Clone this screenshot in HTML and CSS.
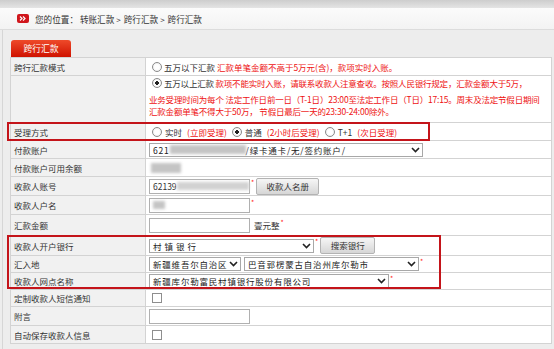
FILE: index.html
```html
<!DOCTYPE html>
<html lang="zh-CN">
  <head>
    <meta charset="UTF-8" />
    <title>跨行汇款</title>
    <link rel="stylesheet" href="styles.css">
  </head>
  <body>
    <div class="topbar"></div>
    <div class="crumb">
      <svg class="crumb-icon" width="12" height="9" viewBox="0 0 12 9">
        <rect x="0" y="0" width="12" height="9" rx="2" fill="#d0161c" />
        <path d="M3 2.5 L5 4.5 L3 6.5 M6 2.5 L8 4.5 L6 6.5" stroke="#fff" stroke-width="1.2" fill="none" />
      </svg>
      <span>您的位置： 转账汇款<span class="gt">&gt;</span>跨行汇款<span class="gt">&gt;</span>跨行汇款</span>
    </div>

    <div class="panel">
      <div class="tab">跨行汇款</div>

      <table class="form">
        <tr class="r18">
          <td class="label">跨行汇款模式</td>
          <td class="value">
            <div class="field"><span class="radio"></span>五万以下汇款&nbsp;<span class="warn">汇款单笔金额不高于5万元(含)，款项实时入账。</span></div>
          </td>
        </tr>
        <tr class="r47">
          <td class="label"></td>
          <td class="value notice">
            <div class="l1"><span class="radio on"></span>五万以上汇款&nbsp;<span class="warn">款项不能实时入账，请联系收款人注意查收。按照人民银行规定，汇款金额大于5万，</span></div>
            <div class="ln warn">业务受理时间为每个 法定工作日前一日（T-1日）23:00至法定工作日（T日）17:15。周末及法定节假日期间</div>
            <div class="ln warn">汇款金额单笔不得大于50万， 节假日最后一天的23:30-24:00除外。</div>
          </td>
        </tr>
        <tr class="r18">
          <td class="label">受理方式</td>
          <td class="value">
            <div class="field mode">
              <span class="radio"></span>实时<span class="warn">(立即受理)</span>
              <span class="radio on"></span>普通<span class="warn">(2小时后受理)</span>
              <span class="radio"></span>T+1<span class="warn">(次日受理)</span>
            </div>
          </td>
        </tr>
        <tr class="r18">
          <td class="label">付款账户</td>
          <td class="value">
            <div class="field">
              <span class="sel w-acct"><span class="opt">621<span class="blur b-acct"></span>/绿卡通卡/无/签约账户/</span><svg class="chev" width="9" height="6" viewBox="0 0 9 6"><path d="M1 1 L4.5 4.5 L8 1" stroke="#222" stroke-width="1.6" fill="none" /></svg></span>
            </div>
          </td>
        </tr>
        <tr class="r18">
          <td class="label">付款账户可用余额</td>
          <td class="value"><div class="field"><span class="blur b-bal"></span></div></td>
        </tr>
        <tr class="r19">
          <td class="label">收款人账号</td>
          <td class="value">
            <div class="field">
              <span class="inp">62139<span class="blur b-no"></span></span><span class="req">*</span><span class="btn btn-book">收款人名册</span>
            </div>
          </td>
        </tr>
        <tr class="r19">
          <td class="label">收款人户名</td>
          <td class="value"><div class="field"><span class="inp"><span class="blur b-name"></span></span><span class="req">*</span></div></td>
        </tr>
        <tr class="r21">
          <td class="label">汇款金额</td>
          <td class="value"><div class="field"><span class="inp"></span><span class="unit">壹元整</span><span class="req">*</span></div></td>
        </tr>
        <tr class="r20">
          <td class="label">收款人开户银行</td>
          <td class="value">
            <div class="field">
              <span class="sel w-bank"><span class="opt wide">村镇银行</span><svg class="chev" width="9" height="6" viewBox="0 0 9 6"><path d="M1 1 L4.5 4.5 L8 1" stroke="#222" stroke-width="1.6" fill="none" /></svg></span><span class="req">*</span><span class="btn btn-search">搜索银行</span>
            </div>
          </td>
        </tr>
        <tr class="r17">
          <td class="label">汇入地</td>
          <td class="value">
            <div class="field">
              <span class="sel w-prov"><span class="opt">新疆维吾尔自治区</span><svg class="chev" width="9" height="6" viewBox="0 0 9 6"><path d="M1 1 L4.5 4.5 L8 1" stroke="#222" stroke-width="1.6" fill="none" /></svg></span><span class="sel w-city"><span class="opt">巴音郭楞蒙古自治州库尔勒市</span><svg class="chev" width="9" height="6" viewBox="0 0 9 6"><path d="M1 1 L4.5 4.5 L8 1" stroke="#222" stroke-width="1.6" fill="none" /></svg></span><span class="req">*</span>
            </div>
          </td>
        </tr>
        <tr class="r17">
          <td class="label">收款人网点名称</td>
          <td class="value">
            <div class="field">
              <span class="sel w-branch"><span class="opt">新疆库尔勒富民村镇银行股份有限公司</span><svg class="chev" width="9" height="6" viewBox="0 0 9 6"><path d="M1 1 L4.5 4.5 L8 1" stroke="#222" stroke-width="1.6" fill="none" /></svg></span><span class="req">*</span>
            </div>
          </td>
        </tr>
        <tr class="r17">
          <td class="label">定制收款人短信通知</td>
          <td class="value"><div class="field"><span class="check"></span></div></td>
        </tr>
        <tr class="r19">
          <td class="label">附言</td>
          <td class="value"><div class="field"><span class="inp"></span></div></td>
        </tr>
        <tr class="r18">
          <td class="label">自动保存收款人信息</td>
          <td class="value"><div class="field"><span class="check"></span></div></td>
        </tr>
      </table>

      <!-- red annotation frames drawn over the form -->
      <div class="mark mark-mode"></div>
      <div class="mark mark-bank"></div>
    </div>
  </body>
</html>
```

FILE: styles.css
```css
body {
  margin: 0;
  background-color: #ededed;
  font-family: "Noto Sans CJK SC", "Noto Sans", sans-serif;
  font-size: 8.5px;
  color: #333;
}
.topbar {
  height: 8px;
  background: linear-gradient(#cdcdcd, #e4e4e4);
}
.crumb {
  display: flex;
  align-items: center;
  gap: 6px;
  height: 21px;
  padding-left: 17px;
  background: linear-gradient(#fbfbfb, #f3f3f3);
  border-bottom: 1px solid #dcdcdc;
  font-size: 8.6px;
}
.crumb-icon {
  display: block;
}
.gt {
  margin: 0 3px 0 2px;
  font-size: 8px;
}
.panel {
  position: relative;
  margin-left: 2px;
  padding: 10px 2px 6px 8px;
  border-left: 1px solid #d6d6d6;
}
.tab {
  display: inline-block;
  width: 60px;
  height: 17px;
  line-height: 17px;
  text-align: center;
  color: #fff;
  font-size: 8.8px;
  border-radius: 3px 3px 0 0;
  background: linear-gradient(#ee4a2a, #cf1300);
  vertical-align: bottom;
}
.form {
  width: 542px;
  margin-left: -1px;
  border-collapse: collapse;
  table-layout: fixed;
}
.form td {
  border: 1px solid #d3d3d3;
  padding: 0;
  line-height: 12px;
  white-space: nowrap;
}
.label {
  width: 131px;
  padding-left: 3px !important;
  background-color: #f1f1f1;
}
.value {
  padding-left: 3px !important;
  background-color: #fff;
}
.field {
  display: flex;
  align-items: center;
}
.r17 td { height: 16px; }
.r18 td { height: 17px; }
.r19 td { height: 18px; }
.r20 td { height: 19px; }
.r21 td { height: 20px; }
.r47 td { height: 46px; }
.notice {
  vertical-align: top;
  letter-spacing: -0.2px;
}
.notice .l1 {
  display: flex;
  align-items: center;
  height: 14px;
  margin-bottom: 4px;
}
.notice .ln {
  line-height: 11.5px;
}
.warn {
  color: #ee1111;
}
.radio {
  display: inline-block;
  flex: none;
  box-sizing: border-box;
  width: 10px;
  height: 10px;
  margin: 0 2px 0 3px;
  border: 1px solid #8a8a8a;
  border-radius: 50%;
  background: radial-gradient(#fff 40%, #e6e6e6);
}
.radio.on {
  background: radial-gradient(#222 30%, #fff 36%, #e6e6e6);
}
.mode .radio {
  margin-right: 3px;
}
.mode .warn {
  margin: 0 2px 0 5px;
}
.check {
  display: inline-block;
  box-sizing: border-box;
  width: 10px;
  height: 10px;
  margin-left: 3px;
  border: 1px solid #8e8e8e;
  background: #fff;
}
.inp {
  display: inline-flex;
  align-items: center;
  box-sizing: border-box;
  width: 101px;
  height: 15px;
  padding-left: 3px;
  border: 1px solid #b0b0b0;
  background: #fff;
}
.unit {
  margin-left: 4px;
}
.sel {
  display: inline-flex;
  align-items: center;
  justify-content: space-between;
  box-sizing: border-box;
  height: 14px;
  padding: 0 2px 0 3px;
  border: 1px solid #a8a8a8;
  background: #fff;
  color: #222;
}
.opt {
  display: inline-flex;
  align-items: center;
  letter-spacing: 0.8px;
}
.opt.wide {
  letter-spacing: 3px;
}
.chev {
  display: block;
}
.w-acct { width: 274px; }
.w-bank { width: 165px; }
.w-prov { width: 92px; margin-right: 3px; }
.w-city { width: 175px; }
.w-branch { width: 240px; }
.req {
  align-self: flex-start;
  color: #f22;
  font-size: 7px;
  line-height: 8px;
  margin-left: 1px;
}
.btn {
  display: inline-block;
  box-sizing: border-box;
  height: 17px;
  line-height: 15px;
  text-align: center;
  margin-left: 2px;
  border: 1px solid #b3b3b3;
  border-radius: 2px;
  background: linear-gradient(#f6f6f6, #d6d6d6);
  color: #333;
}
.btn-book { width: 63px; }
.btn-search { width: 55px; }
.blur {
  display: inline-block;
  height: 8px;
  background: #c4c4c4;
  filter: blur(1.5px);
}
.b-acct { width: 76px; height: 9px; }
.b-bal { width: 30px; height: 10px; margin-left: 2px; }
.b-no { width: 72px; background: #d2d2d2; }
.b-name { width: 12px; }
.mark {
  position: absolute;
  box-sizing: border-box;
  border: 2px solid #c4141a;
  pointer-events: none;
}
.mark-mode {
  left: 4px;
  top: 92px;
  width: 423px;
  height: 19px;
}
.mark-bank {
  left: 4px;
  top: 205px;
  width: 434px;
  height: 54px;
}
```
